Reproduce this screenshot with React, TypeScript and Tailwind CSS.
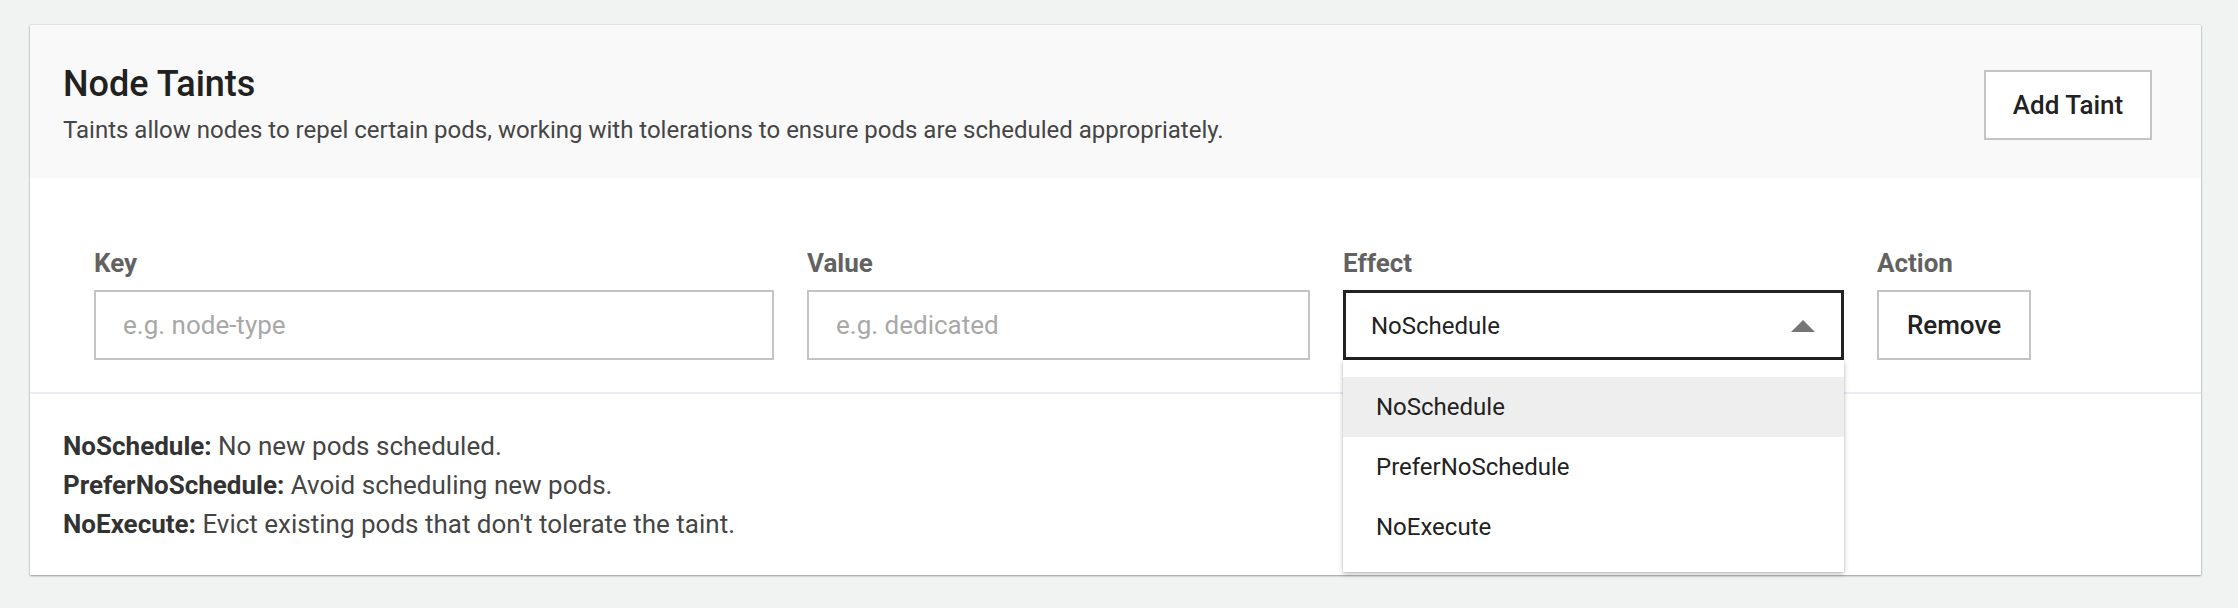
import { useState } from 'react'

const effects = ['NoSchedule', 'PreferNoSchedule', 'NoExecute']

function FieldLabel({ children }: { children: React.ReactNode }) {
  return <div className="mb-[13px] text-[26px] font-bold leading-[28px] text-[#626262]">{children}</div>
}

export default function App() {
  const [effect, setEffect] = useState('NoSchedule')
  const [open, setOpen] = useState(true)

  return (
    <div className="min-h-[608px] bg-[#f1f3f2] pt-[25px] pl-[30px] font-['Roboto','Liberation_Sans',sans-serif]">
      <div className="w-[2171px] bg-white shadow-[0_1px_2px_rgba(0,0,0,0.35),0_0_1px_rgba(0,0,0,0.25)]">
        {/* header */}
        <div className="flex items-center justify-between bg-[#f9f9f9] pt-[39px] pb-[32px] pl-[33px] pr-[49px]">
          <div>
            <h2 className="text-[36px] font-medium leading-[40px] text-[#212121]">Node Taints</h2>
            <p className="mt-[10px] text-[24px] leading-[32px] text-[#454545]">
              Taints allow nodes to repel certain pods, working with tolerations to ensure pods are scheduled appropriately.
            </p>
          </div>
          <button className="h-[70px] w-[168px] border-2 border-[#c4c4c4] bg-white text-[26px] font-medium text-[#222]">
            Add Taint
          </button>
        </div>

        {/* taint row */}
        <div className="flex gap-[33px] border-b-2 border-[#e9ecf5] pt-[71px] pb-[32px] pl-[64px]">
          <div className="w-[680px]">
            <FieldLabel>Key</FieldLabel>
            <input
              placeholder="e.g. node-type"
              className="h-[70px] w-full border-2 border-[#c4c4c4] px-[27px] text-[26px] text-[#222] outline-none placeholder:text-[#a8a8a8]"
            />
          </div>
          <div className="w-[503px]">
            <FieldLabel>Value</FieldLabel>
            <input
              placeholder="e.g. dedicated"
              className="h-[70px] w-full border-2 border-[#c4c4c4] px-[27px] text-[26px] text-[#222] outline-none placeholder:text-[#a8a8a8]"
            />
          </div>
          <div className="w-[501px]">
            <FieldLabel>Effect</FieldLabel>
            <div className="relative">
              <button
                onClick={() => setOpen(!open)}
                className="flex h-[70px] w-full items-center justify-between border-[3px] border-[#222] bg-white pt-[2px] pl-[25px] pr-[26px] text-[24px] text-[#222]"
              >
                <span>{effect}</span>
                <svg width="24" height="12" viewBox="0 0 24 12">
                  <path d="M12 0L24 12H0Z" fill="#767676" />
                </svg>
              </button>
              {open && (
                <ul className="absolute top-full left-0 z-10 w-full bg-white pt-[17px] pb-[15px] shadow-[0_2px_5px_rgba(0,0,0,0.25),0_0_1px_rgba(0,0,0,0.2)]">
                  {effects.map((e) => (
                    <li
                      key={e}
                      onClick={() => {
                        setEffect(e)
                        setOpen(false)
                      }}
                      className={`flex h-[60px] items-center pl-[33px] text-[24px] text-[#222] ${
                        e === effect ? 'bg-[#eeeeee]' : ''
                      }`}
                    >
                      {e}
                    </li>
                  ))}
                </ul>
              )}
            </div>
          </div>
          <div>
            <FieldLabel>Action</FieldLabel>
            <button className="h-[70px] w-[154px] border-2 border-[#c4c4c4] bg-white text-[26px] font-medium text-[#222]">
              Remove
            </button>
          </div>
        </div>

        {/* legend */}
        <div className="px-[33px] pt-[33px] pb-[31px] text-[26px] leading-[39px] text-[#454545]">
          <div>
            <b className="font-bold text-[#333]">NoSchedule:</b> No new pods scheduled.
          </div>
          <div>
            <b className="font-bold text-[#333]">PreferNoSchedule:</b> Avoid scheduling new pods.
          </div>
          <div>
            <b className="font-bold text-[#333]">NoExecute:</b> Evict existing pods that don't tolerate the taint.
          </div>
        </div>
      </div>
    </div>
  )
}
